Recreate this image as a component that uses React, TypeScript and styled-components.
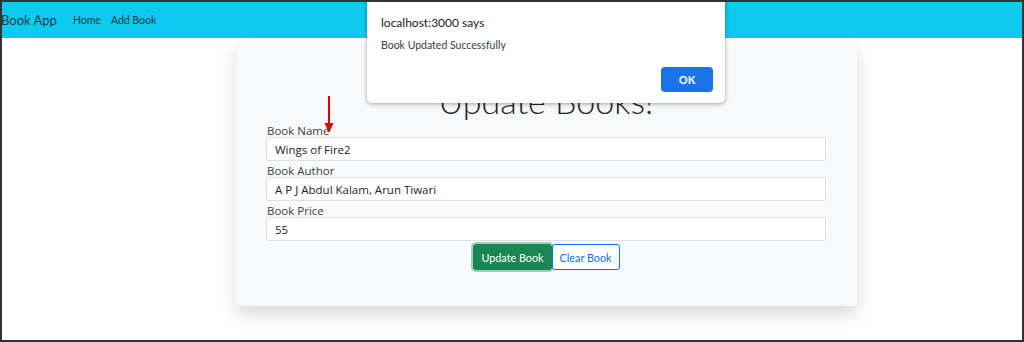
import React from "react";
import styled, { createGlobalStyle } from "styled-components";

const GlobalStyle = createGlobalStyle`
  body {
    margin: 0;
    font-family: "Open Sans", "Noto Sans", sans-serif;
    background: #ffffff;
  }
`;

const Frame = styled.div`
  position: relative;
  width: 1024px;
  height: 342px;
  box-sizing: border-box;
  border: 2px solid #333333;
  overflow: hidden;
  background: #ffffff;
`;

const Navbar = styled.nav`
  display: flex;
  align-items: center;
  height: 36px;
  background-color: #0dcaf0;
`;

const Brand = styled.span`
  font-family: Lato, "Open Sans", sans-serif;
  font-size: 13px;
  color: #1d3a44;
  margin-right: 16px;
  margin-left: -1px;
`;

const NavLink = styled.span`
  font-family: Lato, "Open Sans", sans-serif;
  font-size: 10.5px;
  color: #1d3a44;
  margin-right: 10px;
`;

const Main = styled.main`
  padding: 5px 0 0 234px;
`;

const Card = styled.div`
  width: 621px;
  box-sizing: border-box;
  padding: 36px 31px 36px 30px;
  background-color: #f8f9fa;
  box-shadow: 0 8px 16px rgba(0, 0, 0, 0.15);
`;

const Title = styled.h1`
  margin: 0 0 1px;
  text-align: center;
  font-family: Lato, "Open Sans", sans-serif;
  font-size: 34px;
  font-weight: 300;
  line-height: 44px;
  color: #212529;
`;

const Field = styled.div`
  display: flex;
  flex-direction: column;
`;

const Label = styled.label`
  font-size: 11.5px;
  line-height: 13px;
  color: #3b3f44;
  margin-left: 1px;
`;

const Input = styled.input`
  height: 24px;
  box-sizing: border-box;
  margin-top: 0;
  margin-bottom: 3px;
  padding: 0 8px;
  border: 1px solid #dee2e6;
  border-radius: 3px;
  background: #ffffff;
  font-family: "Open Sans", "Noto Sans", sans-serif;
  font-size: 11.5px;
  color: #212529;
`;

const ButtonRow = styled.div`
  display: flex;
  justify-content: center;
  padding-left: 1px;
  margin-top: 0;
`;

const Button = styled.button<{ $variant: "success" | "outline" }>`
  height: 26px;
  box-sizing: border-box;
  padding: 0 7px;
  border-radius: 3px;
  font-family: Lato, "Open Sans", sans-serif;
  font-size: 10.8px;
  border: 1px solid
    ${(p) => (p.$variant === "success" ? "#198754" : "#0d6efd")};
  background: ${(p) => (p.$variant === "success" ? "#198754" : "#ffffff")};
  color: ${(p) => (p.$variant === "success" ? "#ffffff" : "#0d6efd")};
  box-shadow: ${(p) =>
    p.$variant === "success" ? "0 0 0 2px rgba(60, 153, 110, 0.45)" : "none"};
`;

const Arrow = styled.svg`
  position: absolute;
  left: 321px;
  top: 93px;
`;

const Dialog = styled.div`
  position: absolute;
  left: 365px;
  top: -2px;
  width: 358px;
  height: 103px;
  box-sizing: border-box;
  padding: 15px 12px 0 14px;
  font-family: Lato, "Open Sans", sans-serif;
  background: #ffffff;
  border-radius: 0 0 5px 5px;
  box-shadow: 0 1px 4px rgba(0, 0, 0, 0.35);
`;

const DialogTitle = styled.div`
  font-size: 12px;
  color: #202124;
  line-height: 16px;
`;

const DialogText = styled.div`
  margin-top: 7px;
  font-size: 10.5px;
  color: #3c4043;
  line-height: 14px;
`;

const DialogActions = styled.div`
  display: flex;
  justify-content: flex-end;
  margin-top: 15px;
`;

const OkButton = styled.button`
  width: 52px;
  height: 25px;
  border: none;
  border-radius: 4px;
  background: #1a73e8;
  color: #ffffff;
  font-family: Lato, "Open Sans", sans-serif;
  font-weight: 700;
  font-size: 11px;
`;

export default function App() {
  return (
    <>
      <GlobalStyle />
      <Frame>
        <Navbar>
          <Brand>Book App</Brand>
          <NavLink>Home</NavLink>
          <NavLink>Add Book</NavLink>
        </Navbar>
        <Main>
          <Card>
            <Title>Update Books!</Title>
            <Field>
              <Label>Book Name</Label>
              <Input defaultValue="Wings of Fire2" />
            </Field>
            <Field>
              <Label>Book Author</Label>
              <Input defaultValue="A P J Abdul Kalam, Arun Tiwari" />
            </Field>
            <Field>
              <Label>Book Price</Label>
              <Input defaultValue="55" />
            </Field>
            <ButtonRow>
              <Button $variant="success">Update Book</Button>
              <Button $variant="outline">Clear Book</Button>
            </ButtonRow>
          </Card>
        </Main>
        <Arrow width="12" height="40" viewBox="0 0 12 40">
          <line x1="6" y1="1" x2="6" y2="30" stroke="#e50000" strokeWidth="2" />
          <polygon points="1.5,28 10.5,28 6,38" fill="#e50000" />
        </Arrow>
        <Dialog>
          <DialogTitle>localhost:3000 says</DialogTitle>
          <DialogText>Book Updated Successfully</DialogText>
          <DialogActions>
            <OkButton>OK</OkButton>
          </DialogActions>
        </Dialog>
      </Frame>
    </>
  );
}
